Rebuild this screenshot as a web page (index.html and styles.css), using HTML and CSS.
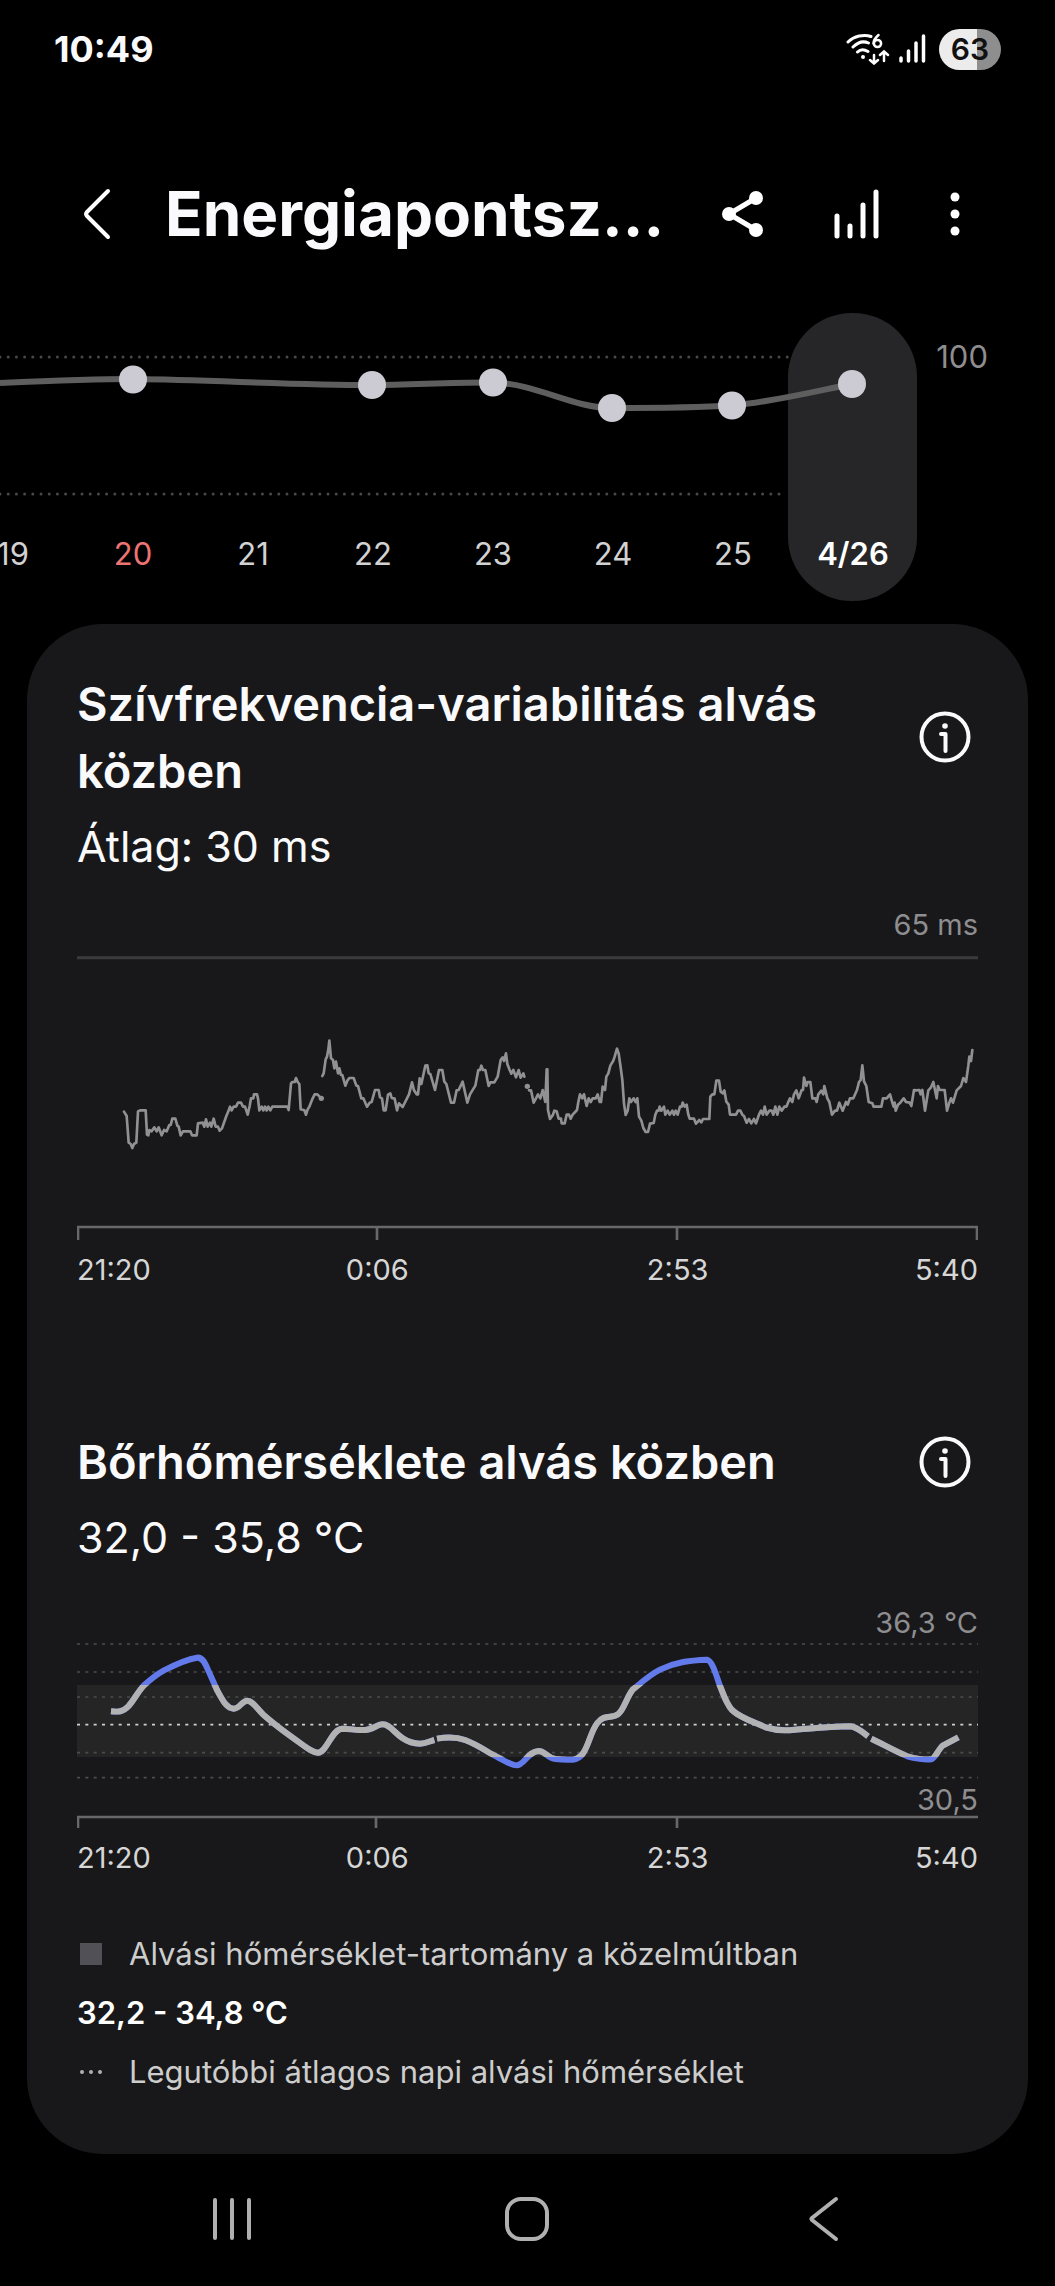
FILE: index.html
```
<!DOCTYPE html>
<html lang="hu">
<head>
    <meta charset="utf-8">
    <meta name="viewport" content="width=device-width, initial-scale=1">
    <title>Energiapontszám</title>
    <link rel="stylesheet" href="styles.css">
</head>
<body>
    <div class="status-bar">
        <span class="clock">10:49</span>
        <div class="status-icons">
            <svg class="wifi" viewBox="0 0 44 32" fill="none" stroke="#fff" stroke-width="3" stroke-linecap="round">
                <path d="M2 9C8 3 18 1 25 3.500M7 14C12 9 18 8 22.500 10M11.500 19C14 16.500 18 16 22 18.500"/>
                <circle cx="17" cy="24" r="2" fill="#fff" stroke="none"/>
                <path stroke-width="2.500" d="M32.500 2C29 5 27.500 8 27.500 10.500M28 22V30M24 27L28 30.500L32 27M38 28V19M34 22L38 18.500L42 22"/>
                <circle cx="31.500" cy="10.500" r="3.600" stroke-width="2.500"/>
            </svg>
            <svg class="signal" viewBox="0 0 28 32" fill="none" stroke="#fff" stroke-width="3.500" stroke-linecap="round">
                <path d="M3 25V28M10.500 18V28M18 10V28M25.500 3V28"/>
            </svg>
            <span class="battery">63</span>
        </div>
    </div>

    <header class="app-bar">
        <button class="icon-btn back" aria-label="Vissza">
            <svg width="30" height="54" viewBox="0 0 30 54" fill="none" stroke="#fff" stroke-width="4" stroke-linecap="round" stroke-linejoin="round">
                <path d="M26 4L5 25Q3 27 5 29L26 50"/>
            </svg>
        </button>
        <h1>Energiapontsz...</h1>
        <button class="icon-btn share" aria-label="Megosztás">
            <svg width="42" height="48" viewBox="0 0 42 48" fill="#fff" stroke="#fff" stroke-width="5">
                <path d="M34 8L7 24L34 40" fill="none"/>
                <g stroke="none">
                    <circle cx="34" cy="8" r="7"/>
                    <circle cx="7" cy="24" r="7"/>
                    <circle cx="34" cy="40" r="7"/>
                </g>
            </svg>
        </button>
        <button class="icon-btn trends" aria-label="Trendek">
            <svg width="46" height="52" viewBox="0 0 46 52" fill="none" stroke="#fff" stroke-width="5" stroke-linecap="round">
                <path d="M4 28V48M17 38V48M30 17V48M43 4V48"/>
            </svg>
        </button>
        <button class="icon-btn more" aria-label="További lehetőségek">
            <svg width="10" height="46" viewBox="0 0 10 46" fill="#fff">
                <circle cx="5" cy="6" r="4.500"/>
                <circle cx="5" cy="23" r="4.500"/>
                <circle cx="5" cy="40" r="4.500"/>
            </svg>
        </button>
    </header>

    <section class="week">
        <svg class="week-chart" viewBox="0 0 1055 288" fill="none">
            <rect x="788" y="0" width="129" height="288" rx="64" fill="#262628"/>
            <path class="week-grid" d="M0 44H790M0 181H786"/>
            <path stroke="#5e5e5f" stroke-width="6" d="M0 70C45 68 90 66 133 66C215 67 290 72 372 72C412 72 452 69 493 69.500C538 71 572 95 612 95C652 95 692 95 732 92.500C772 89 812 79 852 71"/>
            <g fill="#cccbd3">
                <circle cx="133" cy="66.500" r="14"/>
                <circle cx="372" cy="72" r="14"/>
                <circle cx="493" cy="69.500" r="14"/>
                <circle cx="612" cy="95" r="14"/>
                <circle cx="732" cy="92.500" r="14"/>
                <circle cx="852" cy="71" r="14"/>
            </g>
        </svg>
        <span class="week-max">100</span>
        <div class="days">
            <button>19</button>
            <button class="holiday">20</button>
            <button>21</button>
            <button>22</button>
            <button>23</button>
            <button>24</button>
            <button>25</button>
            <button class="selected">4/26</button>
        </div>
    </section>

    <main class="card">
        <section class="hrv">
            <div class="section-head">
                <h2>Szívfrekvencia-variabilitás alvás közben</h2>
                <button class="icon-btn" aria-label="Információ">
                    <svg width="52" height="52" viewBox="0 0 52 52" fill="none" stroke="#fafafc" stroke-width="4" stroke-linecap="round" stroke-linejoin="round">
                        <circle cx="26" cy="26" r="23.500"/>
                        <path d="M22 23H26.500V40"/>
                        <circle cx="26" cy="15" r="2.800" fill="#fafafc" stroke="none"/>
                    </svg>
                </button>
            </div>
            <p class="value">Átlag: 30 ms</p>
            <p class="limit">65 ms</p>
            <svg class="chart" viewBox="0 0 2703 852" fill="none">
                <path d="M0 5H2703" stroke="#3a3a3c" stroke-width="9"/>
                <g transform="translate(-51 162)" stroke-linejoin="round">
                    <path stroke="#919194" stroke-width="8" stroke-linecap="round" d="M192 305L200 318L206 398L212 402L217 414L222 402L229 398L234 304L240 301H257L261 374L265 376L268 360L275 364L283 352L290 364L296 352L305 376L312 360L320 364L328 345H332L337 326H346L352 347L356 350L362 376L369 364H391L396 376H410L414 340L428 338L433 350L438 328L443 350L450 338L454 350L461 326L467 350L474 350L479 362L486 355L499 318L505 304L510 290L515 301L521 290H528L534 278H543L549 290H555L563 314L569 288L573 265L580 265L582 253H591L594 265L598 301L605 290L610 301L615 290L620 301L625 290L631 301L637 290H682L686 300L693 220L697 216H704L708 204L713 216L718 222L722 298L733 301L738 314L743 298L748 290L758 265L764 253H772L784 265M787 198L791 190L797 148L801 140L805 118L808 92L813 145L819 150L823 175L828 155L834 190L838 175L843 195L847 195L856 227L862 212L868 204H881L889 227L894 228L904 265H910L921 290L929 278L935 276L945 240H956L960 262L966 265L971 301H977L984 254L991 250L995 264L1004 266L1011 301L1017 280L1028 291L1047 253L1056 217L1062 241L1070 253L1074 253L1079 205L1084 222L1096 167L1102 166L1106 190L1111 192L1125 240L1137 180L1147 180L1153 215L1159 222L1173 278L1182 278L1190 241L1196 240L1208 215L1222 278L1230 253L1246 227L1255 180H1260L1264 167L1269 180L1276 180L1286 228L1291 217H1303L1313 200L1322 150L1328 142L1332 153L1338 130L1342 162L1349 180L1354 191L1360 180L1368 202L1376 180L1382 203L1390 190L1393 200M1403 229L1404 230M1407 241H1413L1421 278L1428 265L1434 253L1441 265L1448 240L1456 276L1460 178L1462 178L1464 300L1470 327L1479 314L1483 302L1490 304L1496 326L1503 326L1505 340H1514L1520 314H1527L1532 326L1538 314L1551 300L1555 276L1560 253L1567 265L1572 253L1580 288L1586 265L1592 276L1598 265H1607L1613 253L1619 276H1623L1628 230L1635 240L1639 200L1645 190L1651 167L1660 152L1664 140L1671 116L1676 130L1681 165L1687 210L1692 280L1697 315L1703 302L1708 265L1713 276L1721 265L1727 276L1732 265L1737 320L1744 332L1750 354L1757 366H1764L1770 341L1781 339L1786 314L1791 302H1796L1799 290L1804 302L1812 290L1816 314L1823 302L1829 314L1837 302L1842 314L1847 302L1853 314L1860 290L1865 290L1868 278L1874 290L1880 284L1885 314L1889 326H1902L1908 341L1918 330L1924 337L1929 327H1948L1951 260L1957 253H1963L1969 212H1977L1982 245L1988 250L1993 241L1999 275L2006 284L2010 314H2028L2034 302H2041L2047 314L2052 318L2060 338L2067 327L2074 340L2082 327L2088 340L2097 314L2103 302L2109 314L2114 290L2120 314L2128 302L2135 302L2140 314L2146 290L2152 314L2158 290L2165 302L2173 290L2179 290L2184 278L2190 265L2197 276L2202 253L2209 241L2216 265L2225 240L2229 240L2232 203L2239 228L2243 216L2251 216L2257 265L2266 265L2270 276L2275 253L2284 242L2290 253L2293 228L2302 265L2308 276L2316 314L2325 302L2331 302L2338 278L2348 302L2358 276L2363 284L2370 265H2380L2391 240L2397 216L2402 210L2407 166L2412 214L2419 228L2426 276L2437 280L2441 290H2464L2469 265L2480 265L2490 253L2497 278L2501 290L2504 278L2507 302L2514 284L2521 278L2531 265L2538 276L2549 278L2554 288L2562 240L2568 241L2578 240L2582 253L2587 240L2595 302L2605 241L2613 232L2620 216L2630 265L2634 228L2639 240H2654L2661 302L2668 278L2673 265L2679 278L2690 241L2703 228L2710 204L2718 216L2725 167L2728 140L2733 153L2737 120"/>
                    <circle cx="784" cy="265" r="8" fill="#919194"/>
                    <circle cx="1402" cy="229" r="8" fill="#919194"/>
                    <path class="axis" d="M51 651H2754M54 651V690M951 651V690M1851 651V690M2751 651V690"/>
                </g>
            </svg>
            <div class="times"><span>21:20</span><span>0:06</span><span>2:53</span><span>5:40</span></div>
        </section>

        <section class="skin">
            <div class="section-head">
                <h2>Bőrhőmérséklete alvás közben</h2>
                <button class="icon-btn" aria-label="Információ">
                    <svg width="52" height="52" viewBox="0 0 52 52" fill="none" stroke="#fafafc" stroke-width="4" stroke-linecap="round" stroke-linejoin="round">
                        <circle cx="26" cy="26" r="23.500"/>
                        <path d="M22 23H26.500V40"/>
                        <circle cx="26" cy="15" r="2.800" fill="#fafafc" stroke="none"/>
                    </svg>
                </button>
            </div>
            <p class="value">32,0 - 35,8 °C</p>
            <p class="limit">36,3 °C</p>
            <div class="chart-box">
                <svg class="chart" viewBox="0 0 2703 555" fill="none">
                    <defs>
                        <!-- everything outside the usual range is drawn blue -->
                        <clipPath id="in-range"><rect x="51" y="255" width="2703" height="216"/></clipPath>
                        <path id="temp" d="M153 334C175 336 188 337 206 318C224 297 232 278 252 256C276 234 290 223 312 211C345 194 380 178 411 173C428 171 436 190 444 210C456 235 462 250 471 270C490 305 500 325 521 326C540 326 545 302 562 302C578 302 590 325 612 346C650 380 690 408 730 436C750 450 760 457 774 458C800 458 815 388 846 386C870 386 880 390 900 390C945 392 945 373 967 373C990 373 1000 396 1027 414C1046 427 1062 431 1080 431C1096 431 1108 424 1123 420M1131 416C1160 411 1190 411 1215 420C1255 435 1280 455 1310 470C1332 480 1352 496 1370 496C1392 496 1404 454 1436 453C1456 453 1462 475 1486 477C1502 479 1520 480 1538 479C1583 476 1584 405 1612 369C1635 340 1656 358 1675 342C1692 328 1700 292 1718 269C1745 247 1770 224 1800 209C1848 186 1890 181 1941 179C1958 183 1969 228 1979 255C1990 282 1998 310 2016 330C2042 355 2082 366 2120 383C2145 391 2170 393 2204 389C2250 386 2300 381 2372 379C2390 381 2407 396 2424 409M2434 416C2470 433 2505 454 2545 470C2560 475 2595 480 2614 478C2624 477 2634 450 2648 437L2695 412"/>
                    </defs>
                    <g transform="translate(-51 -129)">
                        <rect x="51" y="255" width="2703" height="216" fill="#252525"/>
                        <path class="temp-grid" d="M51 132H2754M51 216H2754M51 291H2754M51 458H2754M51 533H2754"/>
                        <path class="temp-average" d="M51 374H2754"/>
                        <use href="#temp" stroke="#637aeb" stroke-width="18" stroke-linejoin="round"/>
                        <use href="#temp" stroke="#b2b2b2" stroke-width="18" stroke-linejoin="round" clip-path="url(#in-range)"/>
                        <path class="axis" d="M51 651H2754M54 651V684M948 651V684M1851 651V684"/>
                    </g>
                </svg>
                <span class="limit-low">30,5</span>
            </div>
            <div class="times"><span>21:20</span><span>0:06</span><span>2:53</span><span>5:40</span></div>
        </section>

        <div class="legend">
            <p><span class="range-mark"></span>Alvási hőmérséklet-tartomány a közelmúltban</p>
            <p class="range">32,2 - 34,8 °C</p>
            <p><span class="dots-mark"><i></i><i></i><i></i></span>Legutóbbi átlagos napi alvási hőmérséklet</p>
        </div>
    </main>

    <nav class="nav-bar">
        <button class="icon-btn" aria-label="Legutóbbiak">
            <svg width="44" height="48" viewBox="0 0 44 48" fill="none" stroke="#b0b0b0" stroke-width="4" stroke-linecap="round">
                <path d="M5 5V43M22 5V43M39 5V43"/>
            </svg>
        </button>
        <button class="icon-btn" aria-label="Kezdőképernyő">
            <svg width="44" height="48" viewBox="0 0 44 48" fill="none" stroke="#b0b0b0" stroke-width="4">
                <rect x="2" y="4" width="40" height="40" rx="14"/>
            </svg>
        </button>
        <button class="icon-btn" aria-label="Vissza">
            <svg width="44" height="48" viewBox="0 0 44 48" fill="none" stroke="#b0b0b0" stroke-width="4" stroke-linecap="round" stroke-linejoin="round">
                <path d="M35 4L11 23Q10 24 11 25L35 44"/>
            </svg>
        </button>
    </nav>
</body>
</html>
```
FILE: styles.css
```
* {
    box-sizing: border-box;
}
body {
    margin: 0;
    background: #000;
    color: #fafafc;
    font-family: Inter, Roboto, sans-serif;
    overflow-x: hidden;
}
h1, h2, p {
    margin: 0;
}
svg {
    display: block;
}
button {
    padding: 0;
    border: none;
    background: none;
    color: inherit;
    font: inherit;
    cursor: pointer;
}
.icon-btn {
    display: flex;
    flex: none;
}

/* status bar */
.status-bar {
    display: flex;
    justify-content: space-between;
    align-items: center;
    height: 98px;
    padding: 0 54px;
}
.clock {
    font-size: 36px;
    font-weight: 700;
}
.status-icons {
    display: flex;
    align-items: center;
}
.wifi {
    width: 44px;
    height: 32px;
    margin-right: 8px;
}
.signal {
    width: 28px;
    height: 32px;
    margin-right: 13px;
}
.battery {
    width: 62px;
    border-radius: 21px;
    background: linear-gradient(to right, #ececec 62%, #8e8e8e 62%);
    color: #111;
    font-size: 30px;
    font-weight: 600;
    line-height: 41px;
    text-align: center;
}

/* title row */
.app-bar {
    display: flex;
    align-items: center;
    height: 215px;
    padding: 17px 95px 0 82px;
}
.app-bar h1 {
    flex: 1;
    margin-left: 53px;
    font-size: 62px;
    font-weight: 700;
    line-height: 80px;
    white-space: nowrap;
}
.trends {
    margin-left: 69px;
}
.more {
    margin-left: 71px;
}

/* weekly scores */
.week {
    display: grid;
    font-size: 31px;
}
.week > * {
    grid-area: 1 / 1;
}
.week-chart {
    width: 100%;
}
.week-grid {
    stroke: #48484a;
    stroke-width: 3;
    stroke-linecap: round;
    stroke-dasharray: 0 8.2;
}
.week-max {
    justify-self: end;
    margin-right: 67px;
    color: #8e8e90;
    line-height: 88px;
}
.days {
    display: flex;
    align-self: end;
    width: 91%;
    margin: 0 0 27px -47px;
    color: #d2d2d2;
    line-height: 40px;
}
.days button {
    flex: 1;
}
.days .holiday {
    color: #ee7373;
}
.days .selected {
    color: #fff;
    font-weight: 600;
}

/* sleep card */
.card {
    margin: 23px 27px 0;
    padding: 46px 50px 62px;
    border-radius: 76px;
    background: #18181a;
}
.section-head {
    display: flex;
    justify-content: space-between;
    align-items: center;
    padding-right: 7px;
}
.section-head h2 {
    max-width: 800px;
    font-size: 47px;
    font-weight: 600;
    line-height: 67px;
}
.value {
    margin-top: 11px;
    font-size: 43px;
    line-height: 62px;
}
.limit {
    margin-top: 28px;
    color: #8e8e90;
    font-size: 29px;
    line-height: 40px;
    text-align: right;
}
.hrv .chart {
    margin-top: 11px;
}
.skin {
    margin-top: 138px;
}
.skin .limit {
    margin-top: 35px;
}
.chart {
    width: 100%;
}
.axis {
    stroke: #68686b;
    stroke-width: 8;
}
.temp-grid,
.temp-average {
    stroke: #4c4c4d;
    stroke-width: 5;
    stroke-dasharray: 9 16;
}
.temp-average {
    stroke: #d0d0d0;
}
.chart-box {
    display: grid;
}
.chart-box > * {
    grid-area: 1 / 1;
}
.limit-low {
    place-self: end;
    padding-bottom: 8px;
    color: #8e8e90;
    font-size: 29px;
    line-height: 40px;
}
.times {
    display: grid;
    grid-template-columns: 1fr 2fr 2fr 1fr;
    margin-top: 10px;
    color: #d6d6d6;
    font-size: 29px;
    line-height: 40px;
    text-align: center;
}
.times span:first-child {
    text-align: left;
}
.times span:last-child {
    text-align: right;
}
.legend {
    display: grid;
    gap: 19px;
    margin-top: 56px;
    color: #cdcdcd;
    font-size: 31px;
    line-height: 40px;
}
.legend p {
    display: flex;
    align-items: center;
}
.legend .range {
    color: #fff;
    font-weight: 600;
}
.range-mark {
    width: 22px;
    height: 22px;
    margin: 0 27px 0 3px;
    background: #505056;
}
.dots-mark {
    display: flex;
    justify-content: space-between;
    width: 22px;
    margin: 0 27px 0 3px;
}
.dots-mark i {
    width: 4px;
    height: 4px;
    border-radius: 50%;
    background: #b0b0b0;
}

/* system navigation */
.nav-bar {
    display: grid;
    grid-template-columns: repeat(3, 28%);
    justify-content: center;
    justify-items: center;
    padding: 41px 0 43px;
}
```
